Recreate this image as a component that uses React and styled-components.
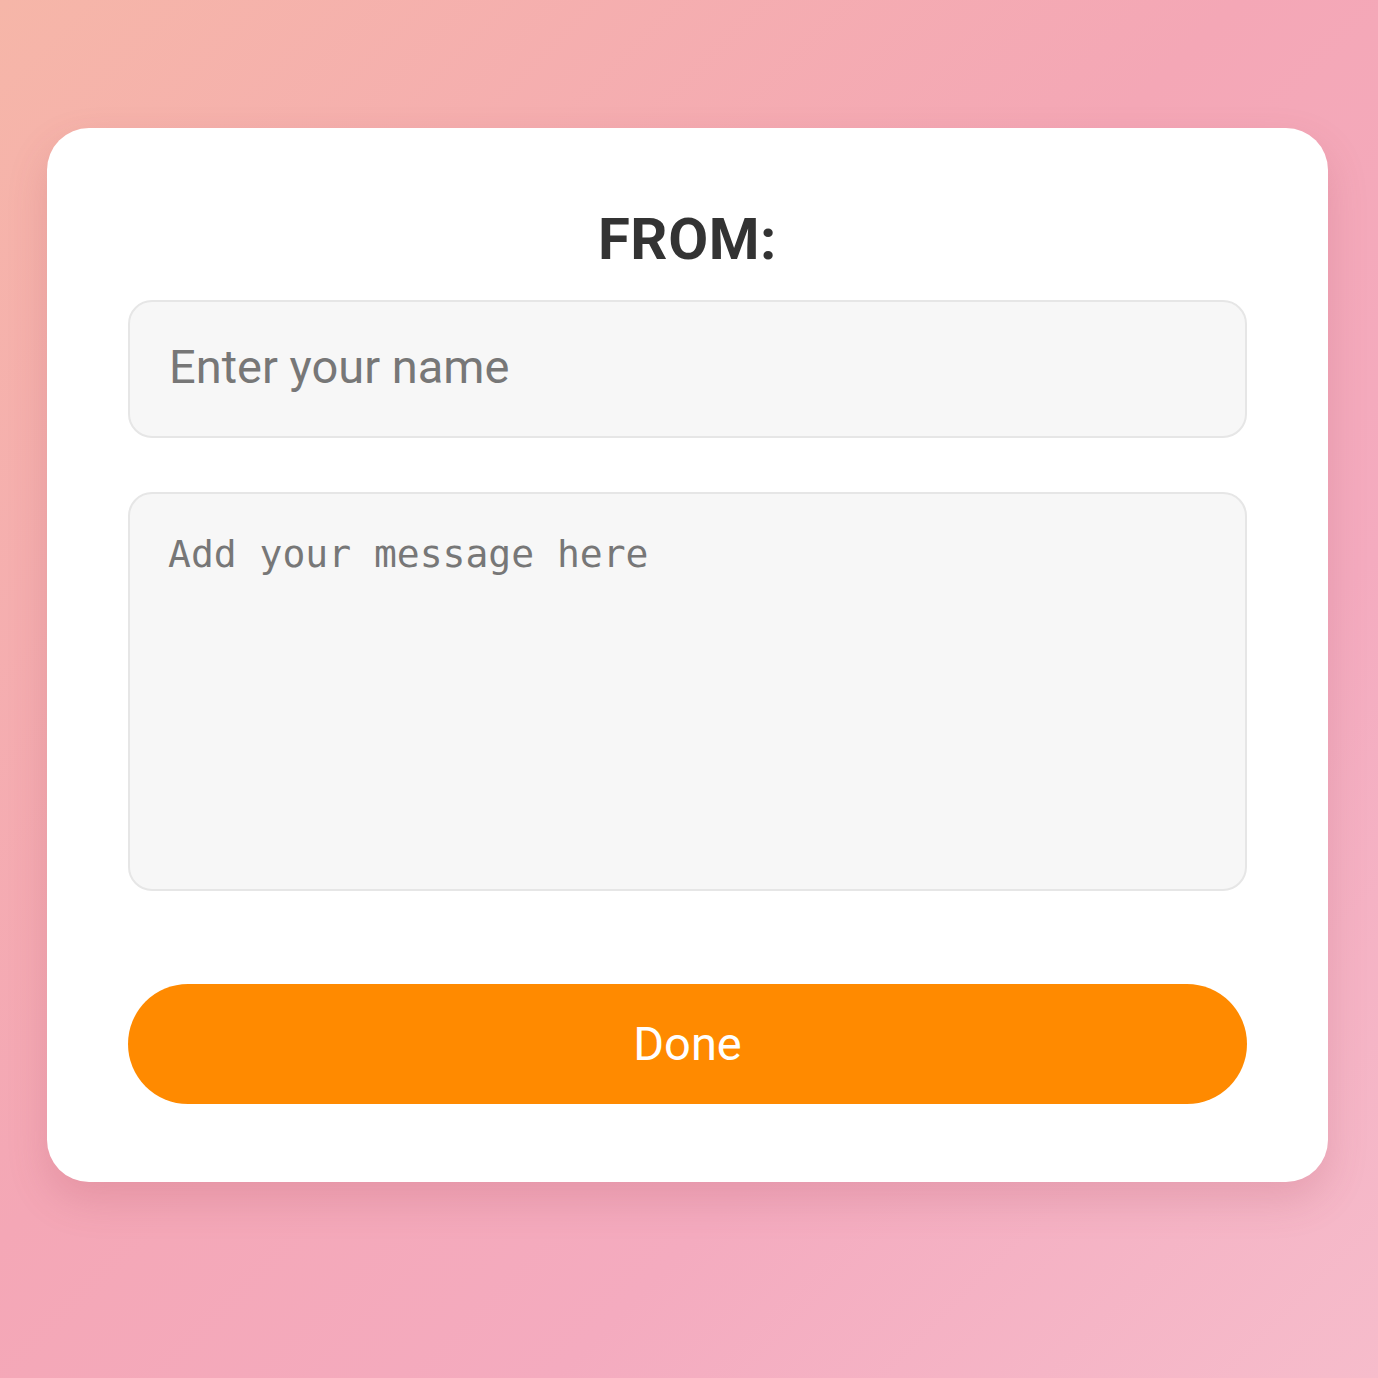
import React from "react";
import styled, { createGlobalStyle } from "styled-components";

const GlobalStyle = createGlobalStyle`
    html, body {
        margin: 0;
        padding: 0;
    }
    body {
        font-family: Roboto, "Noto Sans", sans-serif;
    }
`;

function App() {
    return (
        <>
            <GlobalStyle />
            <Page>
                <Card>
                    <Title>FROM:</Title>
                    <NameInput type="text" placeholder="Enter your name" />
                    <MessageArea placeholder="Add your message here" />
                    <DoneButton>Done</DoneButton>
                </Card>
            </Page>
        </>
    );
}

export default App;

const Page = styled.div`
    width: 1378px;
    height: 1378px;
    box-sizing: border-box;
    padding: 128px 50px 0 47px;
    background: linear-gradient(135deg, #f6b6a8 0%, #f4a7b6 45%, #f4abbf 70%, #f6bccb 100%);
`;
const Card = styled.div`
    width: 1281px;
    height: 1054px;
    box-sizing: border-box;
    padding: 0 81px;
    background: #fff;
    border-radius: 42px;
    box-shadow: 0 18px 40px rgba(160, 60, 80, 0.18);
    display: flex;
    flex-direction: column;
`;
const Title = styled.h2`
    margin: 0;
    padding-top: 79px;
    height: 172px;
    box-sizing: border-box;
    text-align: center;
    font-family: Roboto, "Noto Sans", sans-serif;
    font-weight: 700;
    font-size: 58px;
    line-height: 64px;
    letter-spacing: 0.6px;
    color: #333;
`;
const fieldBase = `
    width: 100%;
    box-sizing: border-box;
    background: #f7f7f7;
    border: 2px solid #e6e6e6;
    border-radius: 24px;
    outline: none;
    color: #333;
`;
const NameInput = styled.input`
    ${fieldBase}
    height: 138px;
    padding: 0 39px 5px;
    font-family: Roboto, sans-serif;
    font-size: 47px;
    &::placeholder {
        color: #777;
    }
`;
const MessageArea = styled.textarea`
    ${fieldBase}
    margin-top: 54px;
    height: 399px;
    padding: 34px 38px;
    resize: none;
    font-family: "DejaVu Sans Mono", monospace;
    font-size: 38px;
    line-height: 52px;
    &::placeholder {
        color: #777;
    }
`;
const DoneButton = styled.button`
    margin-top: 93px;
    width: 100%;
    height: 120px;
    border: 0;
    outline: 0;
    border-radius: 60px;
    background: #ff8a00;
    color: #fff;
    font-family: Roboto, sans-serif;
    font-size: 47px;
    line-height: 1;
    padding: 0 0 2px;
    cursor: pointer;
`;
